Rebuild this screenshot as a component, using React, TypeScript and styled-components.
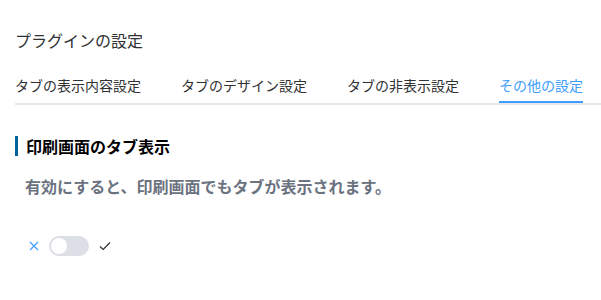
import React, { useState } from "react";
import styled, { createGlobalStyle } from "styled-components";

// global
const GlobalStyle = createGlobalStyle`
  body {
    margin: 0;
    background: #ffffff;
    font-family: "Noto Sans CJK JP", "Noto Sans", sans-serif;
  }
`;

// style
const Page = styled.div`
  padding: 28px 0 0 15px;
`;

const Title = styled.h1`
  margin: 0 0 13px;
  font-size: 16px;
  line-height: 24px;
  font-weight: 400;
  color: #303133;
`;

const TabNav = styled.div`
  box-sizing: border-box;
  display: flex;
  height: 40px;
  border-bottom: 2px solid #e4e7ed;
`;

const Tab = styled.div<{ $active?: boolean }>`
  position: relative;
  padding: 0 20px;
  font-size: 14px;
  line-height: 40px;
  color: ${(p) => (p.$active ? "#409eff" : "#303133")};
  cursor: pointer;

  &:first-child {
    padding-left: 0;
  }
  &:last-child {
    padding-right: 0;
  }

  &::after {
    content: "";
    position: absolute;
    left: ${(p) => (p.$active ? "20px" : "0")};
    right: 0;
    bottom: 0;
    height: 2px;
    background: ${(p) => (p.$active ? "#409eff" : "transparent")};
  }
`;

const Section = styled.section`
  padding-top: 31px;
`;

const Heading = styled.h2`
  margin: 0;
  padding-left: 8px;
  border-left: 3px solid #00649a;
  font-size: 16px;
  line-height: 20px;
  font-weight: 700;
  color: #000000;
`;

const Description = styled.p`
  margin: 18px 0 0 10px;
  font-size: 16px;
  line-height: 24px;
  font-weight: 700;
  color: #6b7280;
`;

const SwitchRow = styled.div`
  display: flex;
  align-items: center;
  gap: 10px;
  margin: 38px 0 0 14px;
`;

const Track = styled.button<{ $on: boolean }>`
  position: relative;
  width: 40px;
  height: 20px;
  padding: 0;
  border: none;
  border-radius: 10px;
  background: ${(p) => (p.$on ? "#409eff" : "#dcdfe6")};
  cursor: pointer;

  &::after {
    content: "";
    position: absolute;
    top: 2px;
    left: ${(p) => (p.$on ? "22px" : "2px")};
    width: 16px;
    height: 16px;
    border-radius: 50%;
    background: #ffffff;
  }
`;

const Icon = styled.svg`
  display: block;
  flex: none;
`;

const tabs = [
  "タブの表示内容設定",
  "タブのデザイン設定",
  "タブの非表示設定",
  "その他の設定",
];

const App = () => {
  // state
  const [on, setOn] = useState(false);

  return (
    <Page>
      <GlobalStyle />
      <Title>プラグインの設定</Title>
      <TabNav>
        {tabs.map((t, i) => (
          <Tab key={t} $active={i === tabs.length - 1}>
            {t}
          </Tab>
        ))}
      </TabNav>
      <Section>
        <Heading>印刷画面のタブ表示</Heading>
        <Description>有効にすると、印刷画面でもタブが表示されます。</Description>
        <SwitchRow>
          <Icon width="10" height="10" viewBox="0 0 10 10">
            <path d="M1 1L9 9M9 1L1 9" stroke="#409eff" strokeWidth="1.2" fill="none" />
          </Icon>
          <Track $on={on} onClick={() => setOn(!on)} />
          <Icon width="12" height="10" viewBox="0 0 12 10">
            <path d="M1 5.5L4.2 8.5L11 1.5" stroke="#303133" strokeWidth="1.2" fill="none" />
          </Icon>
        </SwitchRow>
      </Section>
    </Page>
  );
};

export default App;
